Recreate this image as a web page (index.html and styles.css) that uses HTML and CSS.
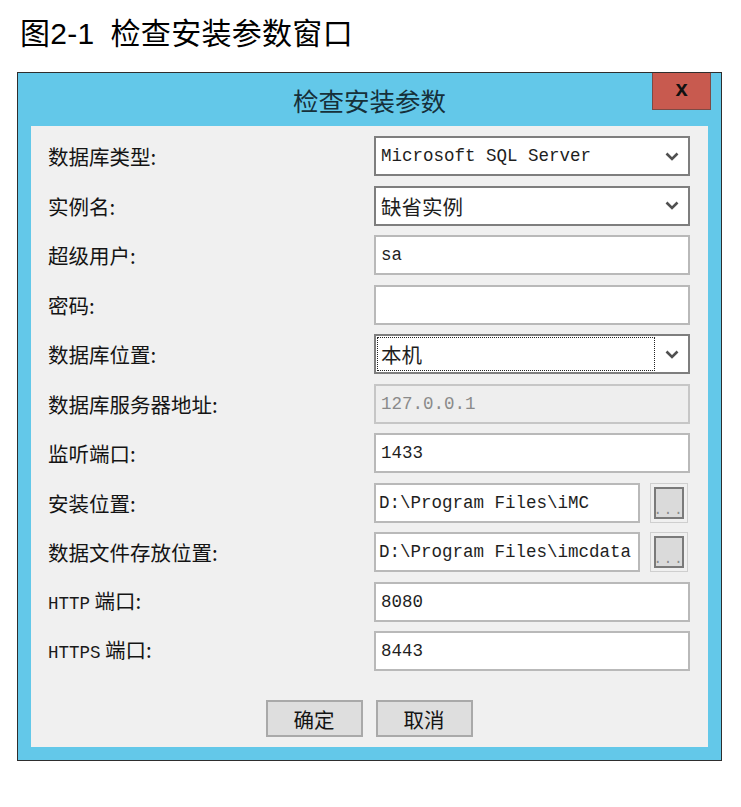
FILE: index.html
```html
<!DOCTYPE html>
<html lang="zh-CN">
<head>
<meta charset="utf-8">
<title>检查安装参数窗口</title>
<link rel="stylesheet" href="styles.css">
</head>
<body>
<h1 class="caption">图2-1<span class="cap-gap"></span>检查安装参数窗口</h1>
<div class="window">
  <div class="titlebar">
    <div class="tb-side"></div>
    <div class="tb-title">检查安装参数</div>
    <div class="tb-side tb-right"><div class="close">x</div></div>
  </div>
  <div class="client">
    <div class="form">
      <div class="label">数据库类型:</div>
      <div class="select"><span class="sel-text mono">Microsoft SQL Server</span><span class="arrow"><svg width="14" height="9" viewBox="0 0 14 9"><path d="M1.5 1.5 L7 7 L12.5 1.5" fill="none" stroke="#505050" stroke-width="2.6"/></svg></span></div>

      <div class="label">实例名:</div>
      <div class="select"><span class="sel-text cjk">缺省实例</span><span class="arrow"><svg width="14" height="9" viewBox="0 0 14 9"><path d="M1.5 1.5 L7 7 L12.5 1.5" fill="none" stroke="#505050" stroke-width="2.6"/></svg></span></div>

      <div class="label">超级用户:</div>
      <div class="input mono">sa</div>

      <div class="label">密码:</div>
      <div class="input mono"></div>

      <div class="label">数据库位置:</div>
      <div class="select"><span class="sel-text cjk focus">本机</span><span class="arrow"><svg width="14" height="9" viewBox="0 0 14 9"><path d="M1.5 1.5 L7 7 L12.5 1.5" fill="none" stroke="#505050" stroke-width="2.6"/></svg></span></div>

      <div class="label">数据库服务器地址:</div>
      <div class="input mono disabled">127.0.0.1</div>

      <div class="label">监听端口:</div>
      <div class="input mono">1433</div>

      <div class="label">安装位置:</div>
      <div class="pathrow">
        <div class="input mono path">D:\Program Files\iMC</div>
        <div class="browse"><div class="browse-inner">...</div></div>
      </div>

      <div class="label">数据文件存放位置:</div>
      <div class="pathrow">
        <div class="input mono path">D:\Program Files\imcdata</div>
        <div class="browse"><div class="browse-inner">...</div></div>
      </div>

      <div class="label"><span class="mono lbl-mono">HTTP</span> 端口:</div>
      <div class="input mono">8080</div>

      <div class="label"><span class="mono lbl-mono">HTTPS</span> 端口:</div>
      <div class="input mono">8443</div>
    </div>
    <div class="buttons">
      <div class="btn">确定</div>
      <div class="btn">取消</div>
    </div>
  </div>
</div>
</body>
</html>
```
FILE: styles.css
```css
html, body {
  margin: 0;
  padding: 0;
  background: #ffffff;
}
body {
  font-family: "Liberation Sans", "Noto Sans CJK SC", sans-serif;
  color: #111;
}
.caption {
  margin: 0;
  padding: 18px 0 0 20px;
  height: 72px;
  box-sizing: border-box;
  font-size: 30px;
  line-height: 32px;
  font-weight: 400;
  color: #000;
  letter-spacing: 0.3px;
}
.cap-gap {
  display: inline-block;
  width: 16px;
}
.window {
  margin-left: 17px;
  width: 705px;
  box-sizing: border-box;
  border: 1px solid #2e2e2e;
  background: #63c8e9;
  padding: 0 13px 13px 13px;
}
.titlebar {
  height: 53px;
  margin: 0 -13px;
  display: grid;
  grid-template-columns: 1fr auto 1fr;
  align-items: center;
}
.tb-title {
  font-family: "Noto Sans CJK SC", sans-serif;
  font-size: 25.5px;
  line-height: 30px;
  color: #16303a;
  padding-top: 1px;
}
.tb-right {
  align-self: start;
  display: flex;
  justify-content: flex-end;
  padding-right: 10px;
}
.close {
  width: 59px;
  height: 37px;
  box-sizing: border-box;
  background: #c85a4f;
  border: 1px solid #7d4a45;
  border-top: none;
  display: flex;
  align-items: center;
  justify-content: center;
  font-family: "Liberation Sans", sans-serif;
  font-weight: 700;
  font-size: 22px;
  line-height: 22px;
  color: #111;
  padding-bottom: 4px;
}
.client {
  background: #f0f0f0;
  padding: 10px 18px 10px 17px;
}
.form {
  display: grid;
  grid-template-columns: 1fr 316px;
  grid-auto-rows: 40px;
  row-gap: 9.5px;
}
.label {
  align-self: center;
  font-family: "Noto Sans CJK SC", sans-serif;
  font-size: 20.5px;
  line-height: 26px;
  color: #141414;
  white-space: nowrap;
}
.mono {
  font-family: "Liberation Mono", monospace;
  font-size: 17.5px;
}
.cjk {
  font-family: "Noto Sans CJK SC", sans-serif;
  font-size: 20.5px;
}
.lbl-mono {
  color: #1a1a1a;
}
.input, .select {
  box-sizing: border-box;
  height: 40px;
  background: #ffffff;
  display: flex;
  align-items: center;
  color: #1e1e1e;
  white-space: nowrap;
  overflow: hidden;
}
.input {
  border: 2px solid #b9b9b9;
  padding: 0 4px 0 5px;
}
.input.disabled {
  background: #eeeeee;
  border-color: #c6c6c6;
  color: #8a8a8a;
}
.select {
  border: 2px solid #7e7e7e;
  padding: 1px;
}
.sel-text {
  flex: 1;
  align-self: stretch;
  display: flex;
  align-items: center;
  padding-left: 3px;
  border: 1px dotted transparent;
}
.sel-text.focus {
  border-color: #222;
}
.arrow {
  width: 32px;
  display: flex;
  justify-content: flex-start;
  padding-left: 10px;
  box-sizing: border-box;
}
.pathrow {
  display: flex;
  gap: 10px;
  height: 40px;
}
.input.path {
  width: 266px;
  padding-left: 3px;
  flex: none;
}
.browse {
  width: 38px;
  height: 40px;
  box-sizing: border-box;
  border: 1px solid #cfcfcf;
  padding: 3px;
  display: flex;
}
.browse-inner {
  flex: 1;
  border: 2px solid #7a7a7a;
  background: #dadada;
  display: flex;
  align-items: flex-end;
  justify-content: center;
  font-family: "Liberation Mono", monospace;
  font-size: 14px;
  line-height: 14px;
  letter-spacing: 2px;
  color: #8a8a8a;
  overflow: hidden;
}
.buttons {
  display: flex;
  justify-content: center;
  gap: 13px;
  margin-top: 29px;
}
.btn {
  width: 97px;
  height: 37px;
  box-sizing: border-box;
  border: 2px solid #a9a9a9;
  background: #dedede;
  display: flex;
  align-items: center;
  justify-content: center;
  font-family: "Noto Sans CJK SC", sans-serif;
  font-size: 20.5px;
  color: #141414;
}
```
